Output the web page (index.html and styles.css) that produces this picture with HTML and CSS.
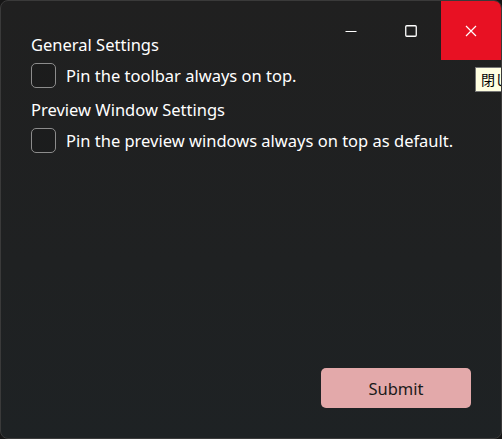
FILE: index.html
```html
<!DOCTYPE html>
<html lang="en">
<head>
<meta charset="UTF-8">
<meta name="viewport" content="width=device-width, initial-scale=1.0">
<title>Settings</title>
<link rel="stylesheet" href="styles.css">
</head>
<body>

<div class="window">
    <div class="caption">
        <button class="caption-btn" type="button" aria-label="Minimize">
            <svg width="12" height="12" viewBox="0 0 12 12"><path d="M0.5 6.5h11" stroke="#fff" stroke-width="1.2"/></svg>
        </button>
        <button class="caption-btn" type="button" aria-label="Maximize">
            <svg width="12" height="12" viewBox="0 0 12 12"><rect x="0.75" y="0.75" width="10.5" height="10.5" rx="1" fill="none" stroke="#fff" stroke-width="1.3"/></svg>
        </button>
        <button class="caption-btn close" type="button" aria-label="Close">
            <svg width="12" height="12" viewBox="0 0 12 12"><path d="M1 1l10 10M11 1L1 11" stroke="#fff" stroke-width="1.2"/></svg>
        </button>
    </div>
    <div class="tooltip">閉じる</div>

    <div class="content">
        <h2 class="section">General Settings</h2>
        <label class="check">
            <span class="box"></span>
            <span>Pin the toolbar always on top.</span>
        </label>

        <h2 class="section">Preview Window Settings</h2>
        <label class="check">
            <span class="box"></span>
            <span>Pin the preview windows always on top as default.</span>
        </label>
    </div>

    <button class="submit" type="button">Submit</button>
</div>

</body>
</html>
```

FILE: styles.css
```css
html, body {
    margin: 0;
    padding: 0;
    background-color: #161616;
}

body {
    font-family: "Noto Sans", "Open Sans", sans-serif;
    color: #ffffff;
}

.window {
    position: relative;
    box-sizing: border-box;
    width: 502px;
    height: 439px;
    display: flex;
    flex-direction: column;
    border: 1px solid #3a3a3a;
    border-radius: 8px;
    background: linear-gradient(180deg, #202020 0%, #1f2122 60%, #1e2224 100%);
    overflow: hidden;
}

.caption {
    position: absolute;
    top: 0;
    right: 0;
    display: flex;
}

.caption-btn {
    width: 60px;
    height: 59px;
    display: flex;
    align-items: center;
    justify-content: center;
    padding: 0;
    border: none;
    background: transparent;
}

.caption-btn.close {
    background-color: #e81123;
}

.tooltip {
    position: absolute;
    top: 66px;
    left: 474px;
    padding: 2px 5px 3px;
    border: 1px solid #767676;
    background-color: #ffffe1;
    color: #000000;
    font-family: "Noto Sans CJK JP", sans-serif;
    font-size: 14px;
    line-height: 18px;
    white-space: nowrap;
}

.content {
    display: flex;
    flex-direction: column;
    padding: 33px 30px 0;
}

.section {
    margin: 0 0 7px;
    font-size: 16.5px;
    font-weight: 400;
    line-height: 22px;
}

.check {
    display: flex;
    align-items: center;
    gap: 10px;
    margin-bottom: 11px;
    font-size: 16.5px;
}

.box {
    box-sizing: border-box;
    width: 25px;
    height: 25px;
    border: 1.5px solid #8c8c8c;
    border-radius: 5px;
    background-color: rgba(0, 0, 0, 0.1);
}

.submit {
    align-self: flex-end;
    margin: auto 30px 30px 0;
    width: 150px;
    height: 40px;
    border: none;
    border-radius: 5px;
    background-color: #e3a9aa;
    color: #1a1a1a;
    font-family: "Noto Sans", "Open Sans", sans-serif;
    font-size: 16.5px;
}
```
